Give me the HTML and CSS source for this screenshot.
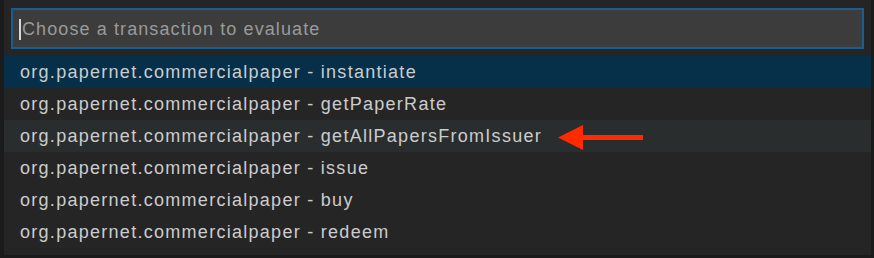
FILE: index.html
```html
<!DOCTYPE html>
<html lang="en">
<head>
  <meta charset="UTF-8">
  <title>Quick Pick</title>
  <link rel="stylesheet" href="styles.css">
</head>
<body>

<div class="picker">
  <div class="picker-input">
    <span class="caret"></span>
    <span class="placeholder">Choose a transaction to evaluate</span>
  </div>

  <ul class="picker-list">
    <li class="item selected">org.papernet.commercialpaper - instantiate</li>
    <li class="item">org.papernet.commercialpaper - getPaperRate</li>
    <li class="item hover">
      org.papernet.commercialpaper - getAllPapersFromIssuer
      <svg class="arrow" width="86" height="26" viewBox="0 0 86 26">
        <path d="M0 12.5 L25 0 L25 10 L85 10 L85 15 L25 15 L25 25 Z" fill="#ff2a00"/>
      </svg>
    </li>
    <li class="item">org.papernet.commercialpaper - issue</li>
    <li class="item">org.papernet.commercialpaper - buy</li>
    <li class="item">org.papernet.commercialpaper - redeem</li>
  </ul>
</div>

</body>
</html>
```

FILE: styles.css
```css
/* ============================
   Base
============================ */
* {
  box-sizing: border-box;
}

body {
  margin: 0;
  width: 874px;
  height: 258px;
  background: #1b1b1b;
  font-family: "Liberation Sans", Arial, sans-serif;
  overflow: hidden;
}

/* ============================
   Quick pick panel
============================ */
.picker {
  margin-left: 4px;
  width: 867px;
  height: 255px;
  background: #252526;
  padding: 8px 7px 0 7px;
}

.picker-input {
  display: flex;
  align-items: center;
  height: 41px;
  background: #3c3c3c;
  border: 2px solid #1c5d8f;
  padding-left: 6px;
  padding-top: 2px;
}

.caret {
  width: 2px;
  height: 21px;
  background: #d8d8d8;
  margin-right: 1px;
}

.placeholder {
  color: #9a9a9a;
  font-size: 18px;
  letter-spacing: 1.1px;
}

/* ============================
   List
============================ */
.picker-list {
  list-style: none;
  margin: 7px -7px 0 -7px;
  padding: 0;
}

.item {
  display: flex;
  align-items: center;
  height: 32px;
  padding-left: 16px;
  padding-top: 1px;
  color: #cccccc;
  font-size: 18px;
  letter-spacing: 1.28px;
}

.item.selected {
  background: #062f4a;
}

.item.hover {
  background: #2a2d2e;
}

.arrow {
  margin-left: 16px;
  margin-top: 2px;
}
```
